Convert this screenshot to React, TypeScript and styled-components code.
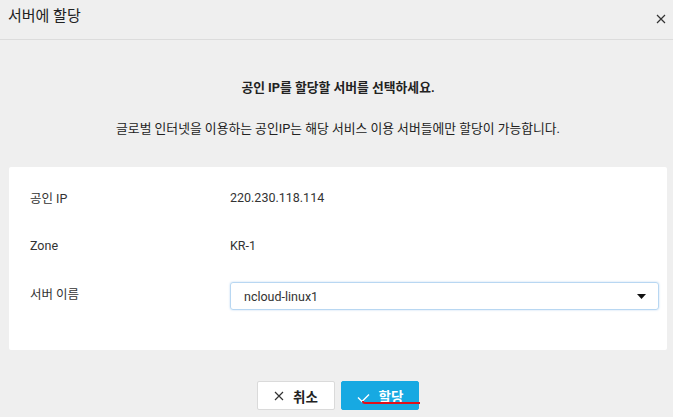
import React from 'react';
import styled, { createGlobalStyle } from 'styled-components';

const GlobalStyle = createGlobalStyle`
  html, body {
    margin: 0;
    padding: 0;
    background: #efefef;
    font-family: Roboto, "Noto Sans CJK KR", sans-serif;
    color: #333;
  }
`;

const Dialog = styled.div`
  width: 673px;
  height: 417px;
  display: flex;
  flex-direction: column;
  background: #efefef;
  overflow: hidden;
`;

const Header = styled.header`
  height: 40px;
  box-sizing: border-box;
  border-bottom: 1px solid #dcdcdc;
  display: flex;
  align-items: center;
  justify-content: space-between;
  padding: 0 6px 11px 8px;
`;

const Title = styled.h1`
  margin: 0;
  font-size: 15px;
  font-weight: normal;
  color: #222;
`;

const CloseButton = styled.button`
  border: none;
  background: none;
  padding: 0;
  width: 12px;
  height: 12px;
  display: flex;
  align-items: center;
  justify-content: center;
  margin-top: 10px;
`;

const Body = styled.div`
  padding: 0 6px 0 9px;
  display: flex;
  flex-direction: column;
`;

const Lead = styled.p<{ $bold?: boolean }>`
  margin: 0;
  text-align: center;
  font-size: 12.8px;
  font-weight: ${(p) => (p.$bold ? 'bold' : 'normal')};
  color: #222;
`;

const Intro = styled.div`
  display: flex;
  flex-direction: column;
  gap: 22px;
  padding: 37px 0 30px 0;
`;

const Card = styled.div`
  background: #fff;
  border-radius: 2px;
  padding: 6px 8px 33px 21px;
  display: flex;
  flex-direction: column;
`;

const Row = styled.div`
  display: grid;
  grid-template-columns: 200px 1fr;
  align-items: center;
  min-height: 48px;
  font-size: 12.5px;
`;

const Label = styled.span`
  color: #333;
`;

const Value = styled.span`
  color: #333;
`;

const SelectBox = styled.div`
  height: 28px;
  box-sizing: border-box;
  border: 1px solid #b8d7f2;
  box-shadow: 0 0 2px rgba(80, 150, 220, 0.4);
  border-radius: 3px;
  display: flex;
  align-items: center;
  justify-content: space-between;
  padding: 0 12px 0 13px;
  margin-top: 6px;
  font-size: 12.5px;
`;

const Footer = styled.div`
  display: flex;
  justify-content: center;
  gap: 6px;
  padding-top: 31px;
`;

const Button = styled.button<{ $primary?: boolean }>`
  position: relative;
  height: 29px;
  width: 78px;
  box-sizing: border-box;
  border-radius: 2px;
  border: 1px solid ${(p) => (p.$primary ? '#17a9e2' : '#dadada')};
  background: ${(p) => (p.$primary ? '#17a9e2' : '#fff')};
  color: ${(p) => (p.$primary ? '#fff' : '#222')};
  font-family: Roboto, "Noto Sans CJK KR", sans-serif;
  font-size: 13.5px;
  font-weight: bold;
  display: flex;
  align-items: center;
  justify-content: center;
  gap: 9px;
  padding: 0;
`;

const Underline = styled.span`
  position: absolute;
  left: 20px;
  right: -2px;
  top: 19px;
  height: 1px;
  border-bottom: 2px solid #e0101a;
  border-left: 2px solid #e0101a;
  border-bottom-left-radius: 4px;
`;

function XIcon({ size, color }: { size: number; color: string }) {
  return (
    <svg width={size} height={size} viewBox="0 0 10 10">
      <path d="M1 1 L9 9 M9 1 L1 9" stroke={color} strokeWidth="1.2" />
    </svg>
  );
}

function App() {
  return (
    <Dialog>
      <GlobalStyle />
      <Header>
        <Title>서버에 할당</Title>
        <CloseButton>
          <XIcon size={10} color="#333" />
        </CloseButton>
      </Header>
      <Body>
        <Intro>
          <Lead $bold>공인 IP를 할당할 서버를 선택하세요.</Lead>
          <Lead>글로벌 인터넷을 이용하는 공인IP는 해당 서비스 이용 서버들에만 할당이 가능합니다.</Lead>
        </Intro>
        <Card>
          <Row>
            <Label>공인 IP</Label>
            <Value>220.230.118.114</Value>
          </Row>
          <Row>
            <Label>Zone</Label>
            <Value>KR-1</Value>
          </Row>
          <Row>
            <Label>서버 이름</Label>
            <SelectBox>
              <span>ncloud-linux1</span>
              <svg width="9" height="5" viewBox="0 0 9 5">
                <path d="M0 0 L9 0 L4.5 5 Z" fill="#111" />
              </svg>
            </SelectBox>
          </Row>
        </Card>
        <Footer>
          <Button>
            <XIcon size={10} color="#333" />
            취소
          </Button>
          <Button $primary>
            <svg width="13" height="10" viewBox="0 0 13 10" style={{ marginTop: 4 }}>
              <path d="M1 4.5 L5 8.5 L12 1.5" stroke="#fff" strokeWidth="1.4" fill="none" />
            </svg>
            할당
            <Underline />
          </Button>
        </Footer>
      </Body>
    </Dialog>
  );
}

export default App;
